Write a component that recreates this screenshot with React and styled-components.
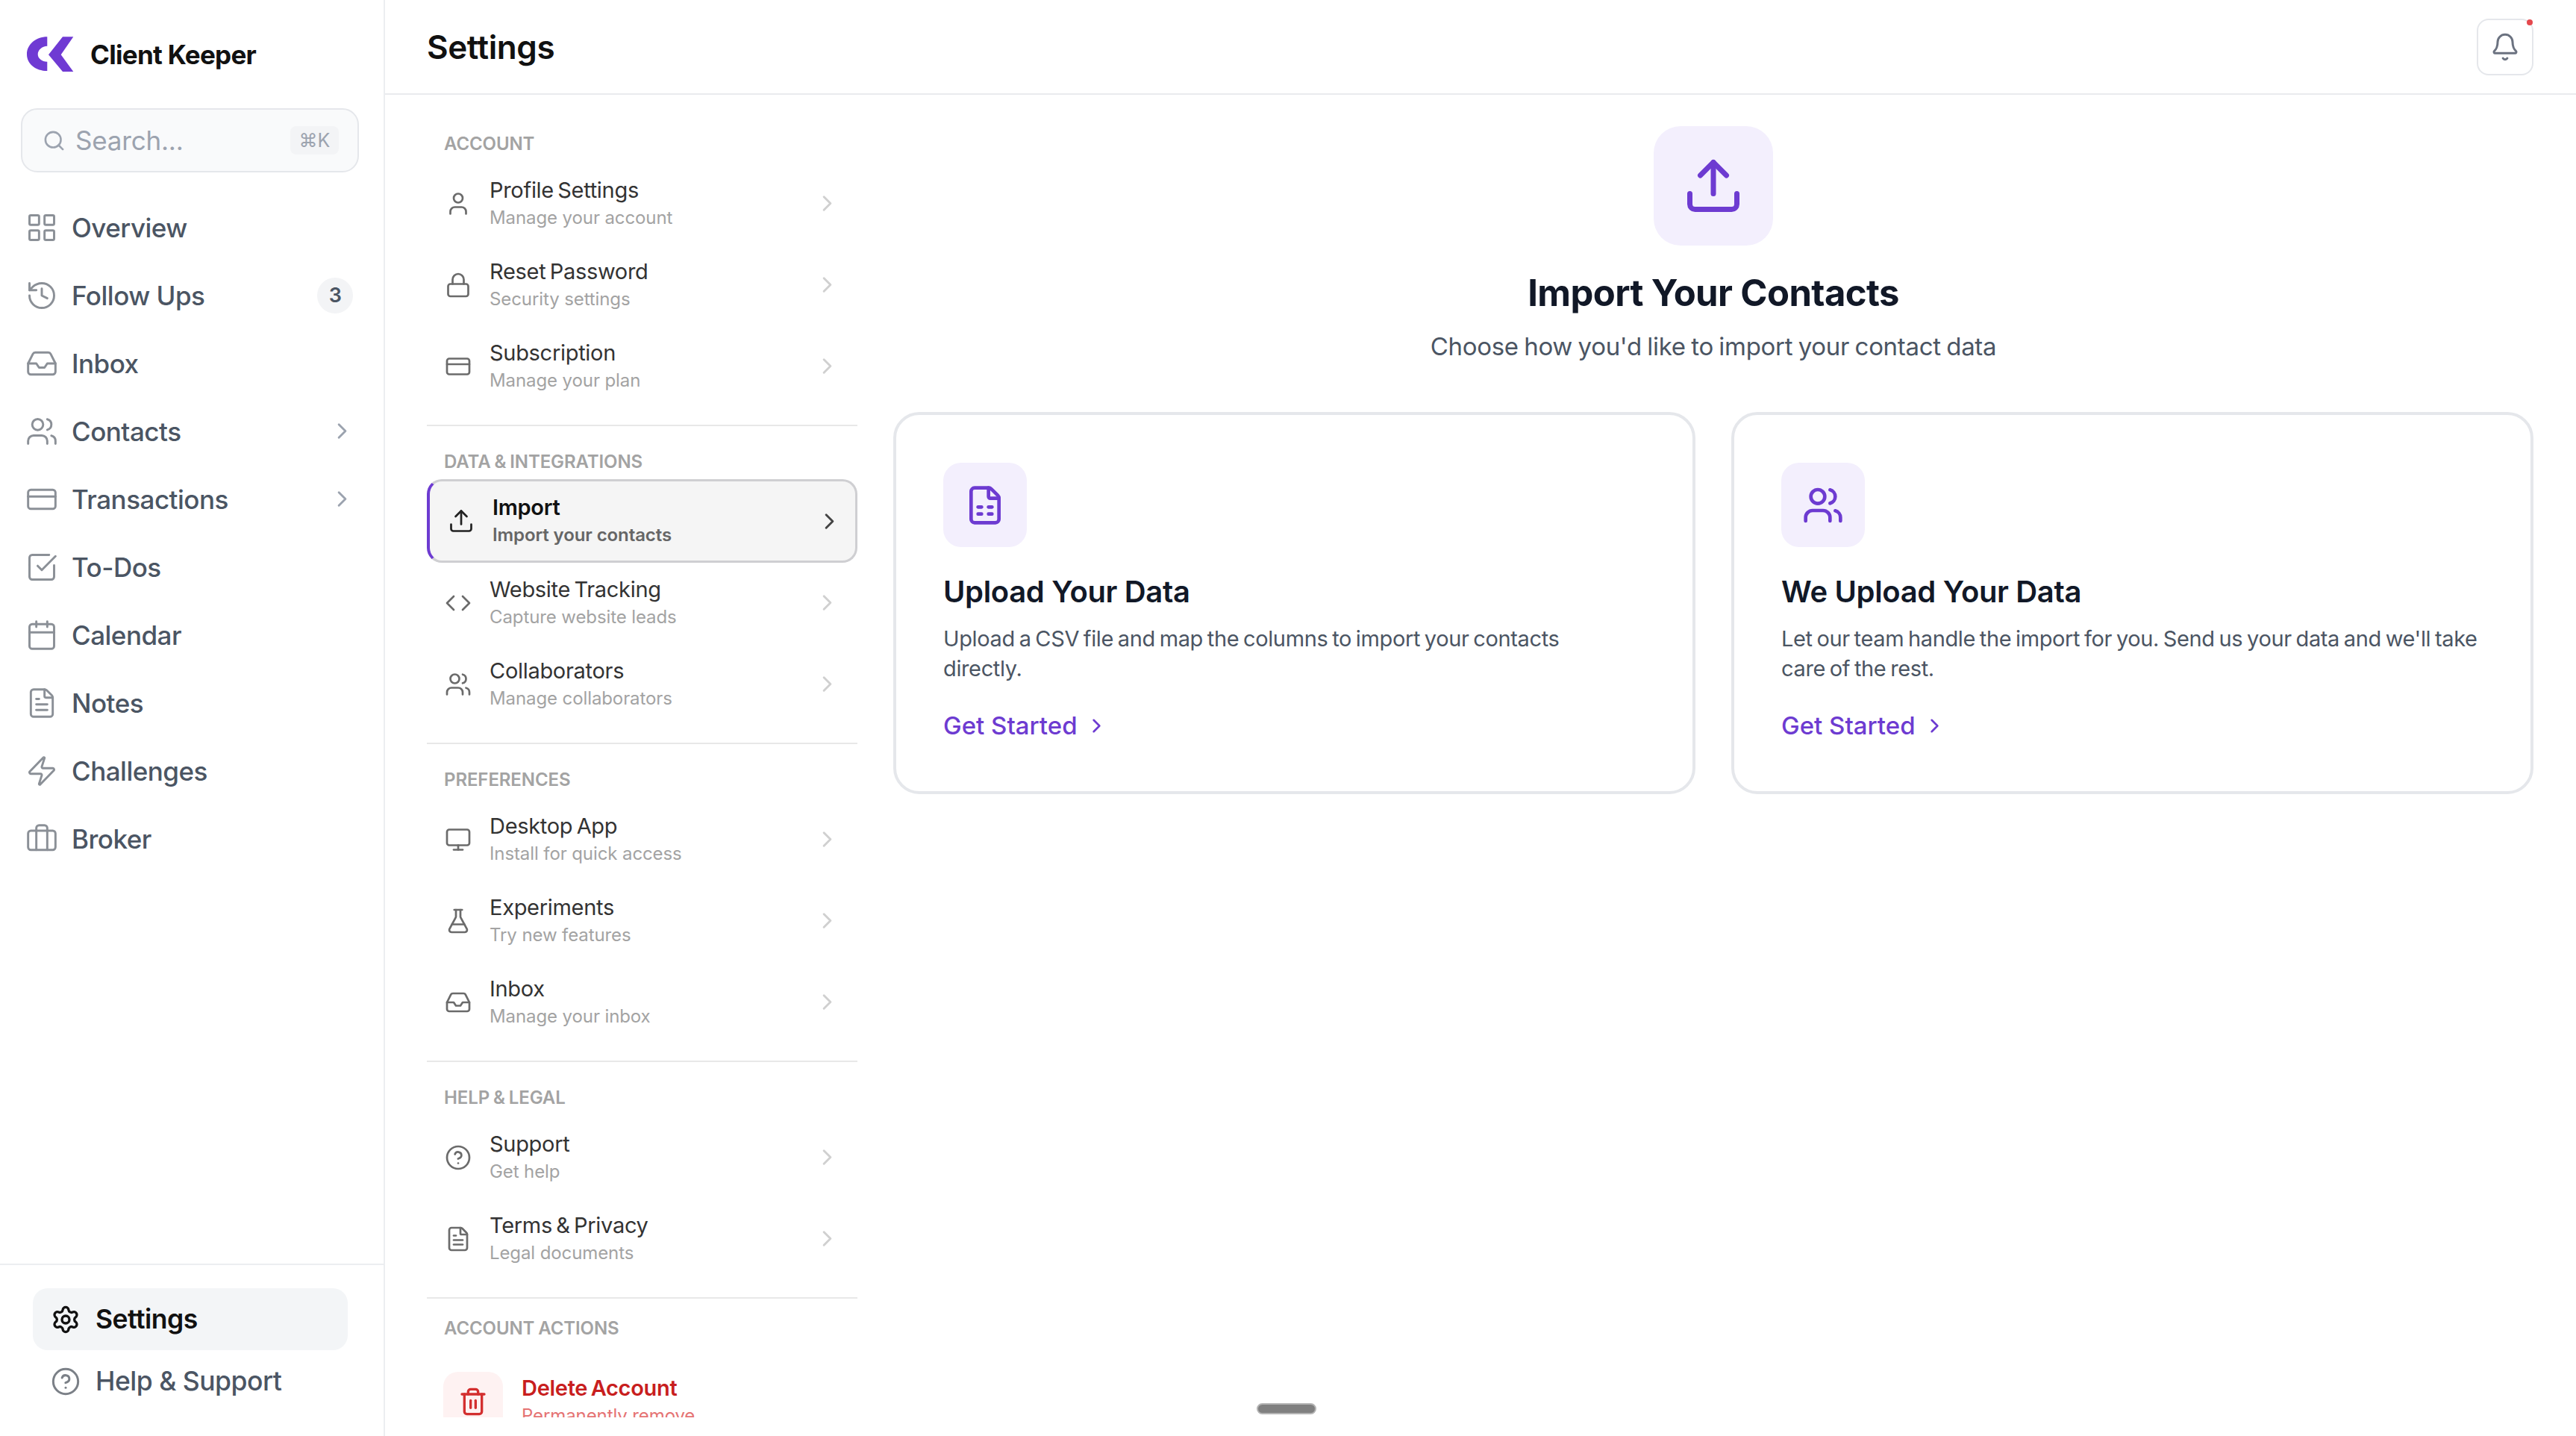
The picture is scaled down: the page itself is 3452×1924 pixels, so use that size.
import React from 'react';
import styled, { createGlobalStyle } from 'styled-components';
import {
  Search, LayoutGrid, History, Inbox, Users, CreditCard, SquareCheckBig, Calendar, FileText, Zap,
  Briefcase, ChevronRight, Settings, CircleHelp, Bell, User, Lock, Upload, Code, Monitor,
  FlaskConical, Trash2, FileSpreadsheet,
} from 'lucide-react';

const GlobalStyle = createGlobalStyle`
  html, body {
    margin: 0;
    padding: 0;
    background: #fff;
    font-family: Inter, "Liberation Sans", sans-serif;
  }
  * { box-sizing: border-box; }
`;

const Page = styled.div`
  display: grid;
  grid-template-columns: 516px 1fr;
  width: 3452px;
  height: 1924px;
  overflow: hidden;
  position: relative;
`;

const Sidebar = styled.aside`
  display: flex;
  flex-direction: column;
  border-right: 2px solid #eceef1;
  height: 1924px;
`;

const Brand = styled.div`
  display: flex;
  align-items: center;
  gap: 20px;
  height: 145px;
  padding: 0 0 0 35px;
  flex: none;
`;

const BrandName = styled.span`
  font-size: 35px;
  font-weight: 700;
  color: #111;
  letter-spacing: -0.7px;
`;

const SearchBox = styled.div`
  display: flex;
  align-items: center;
  flex: none;
  height: 86px;
  margin: 0 33px 0 28px;
  padding: 0 25px 0 27px;
  gap: 13px;
  background: #f9fafb;
  border: 2px solid #e5e7eb;
  border-radius: 22px;
  color: #9ca3af;
`;

const SearchText = styled.span`
  flex: 1;
  font-size: 35px;
  color: #9ca3af;
  letter-spacing: -0.2px;
`;

const Kbd = styled.span`
  display: flex;
  align-items: center;
  justify-content: center;
  width: 65px;
  height: 38px;
  border-radius: 8px;
  background: #f3f4f6;
  color: #9ca3af;
  font-size: 25px;
`;

const Nav = styled.nav`
  display: flex;
  flex-direction: column;
  padding: 28px 34px 0 34px;
`;

const NavRow = styled.div`
  display: flex;
  align-items: center;
  height: 91px;
  gap: 18px;
  color: #4b5563;
  font-size: 35px;
  font-weight: 500;
  letter-spacing: -0.5px;
  svg { color: #8b9097; flex: none; }
`;

const NavLabel = styled.span`
  flex: 1;
`;

const Badge = styled.span`
  display: flex;
  align-items: center;
  justify-content: center;
  width: 48px;
  height: 48px;
  margin-right: 7px;
  border-radius: 50%;
  background: #f3f4f6;
  color: #4b5563;
  font-size: 27px;
  font-weight: 600;
`;

const NavChevron = styled.span`
  display: flex;
  margin-right: 4px;
  svg { color: #9ca3af; }
`;

const SideFoot = styled.div`
  margin-top: auto;
  display: flex;
  flex-direction: column;
  padding: 31px 48px 0 44px;
  height: 231px;
  border-top: 2px solid #eceef1;
`;

const FootRow = styled.div`
  display: flex;
  align-items: center;
  gap: 20px;
  height: 83px;
  padding-left: 24px;
  border-radius: 20px;
  background: ${p => (p.$active ? '#f3f5f7' : 'transparent')};
  color: ${p => (p.$active ? '#111' : '#4b5563')};
  font-size: 35.5px;
  font-weight: ${p => (p.$active ? 600 : 500)};
  letter-spacing: -0.5px;
  svg { color: ${p => (p.$active ? '#111' : '#7b8087')}; flex: none; }
`;

const Main = styled.main`
  display: flex;
  flex-direction: column;
  min-width: 0;
`;

const TopBar = styled.header`
  display: flex;
  align-items: center;
  justify-content: space-between;
  flex: none;
  height: 127px;
  padding: 0 57px 0 56px;
  border-bottom: 2px solid #e9ebee;
`;

const PageTitle = styled.h1`
  margin: 0;
  font-size: 44px;
  font-weight: 600;
  color: #111;
  letter-spacing: -0.4px;
`;

const BellButton = styled.button`
  position: relative;
  display: flex;
  align-items: center;
  justify-content: center;
  width: 76px;
  height: 76px;
  padding: 0;
  background: #fff;
  border: 2px solid #e5e7eb;
  border-radius: 16px;
  color: #6b7280;
`;

const BellDot = styled.span`
  position: absolute;
  top: -1px;
  right: -1px;
  width: 8px;
  height: 8px;
  border-radius: 50%;
  background: #e5484d;
`;

const Body = styled.div`
  display: flex;
  flex: 1;
  gap: 48px;
  min-height: 0;
  padding: 0 57px 0 56px;
`;

const MenuColumn = styled.div`
  flex: none;
  width: 577px;
  height: 1772px;
  overflow: hidden;
  padding-top: 51px;
`;

const MenuSection = styled.section`
  padding-bottom: ${p => (p.$last ? 0 : 24)}px;
  margin-bottom: ${p => p.$gap ?? 33}px;
  border-bottom: ${p => (p.$last ? 'none' : '2px solid #e8e8e8')};
`;

const SectionTitle = styled.div`
  height: 30px;
  line-height: 30px;
  margin: 0 0 10px 23px;
  color: #a3a3a3;
  font-size: 24px;
  font-weight: 600;
  letter-spacing: -0.1px;
  word-spacing: -1px;
`;

const Row = styled.div`
  display: flex;
  align-items: center;
  height: 109px;
  gap: ${p => (p.$danger ? 25 : 20)}px;
  margin-top: ${p => (p.$danger ? 28 : 0)}px;
  padding: 0 20px;
  border-radius: 20px;
`;

const ActiveRow = styled(Row)`
  height: 112px;
  margin: -2px 0 -1px;
  border: 3px solid #cfcfd2;
  border-left: 4px solid #6d3bd1;
  background: #f5f5f5;
`;

const RowIcon = styled.span`
  display: flex;
  justify-content: center;
  width: 44px;
  flex: none;
  color: ${p => (p.$active ? '#222' : '#6b6b6b')};
`;

const RowIconBox = styled.span`
  display: flex;
  align-items: center;
  justify-content: center;
  flex: none;
  width: 80px;
  height: 80px;
  margin-left: 2px;
  border-radius: 20px;
  background: #fef2f2;
  color: #d32f2f;
`;

const RowText = styled.div`
  flex: 1;
  min-width: 0;
`;

const RowTitle = styled.div`
  font-size: 29px;
  line-height: 38px;
  font-weight: ${p => (p.$active || p.$danger ? 600 : 400)};
  color: ${p => (p.$danger ? '#c81e1e' : p.$active ? '#111' : '#333')};
  letter-spacing: -0.3px;
  word-spacing: -2.5px;
`;

const RowSub = styled.div`
  font-size: 24px;
  line-height: 36px;
  font-weight: ${p => (p.$active ? 600 : 400)};
  color: ${p => (p.$danger ? '#e57373' : p.$active ? '#666' : '#a3a3a3')};
  letter-spacing: -0.1px;
`;

const RowChevron = styled.span`
  display: flex;
  color: ${p => (p.$active ? '#444' : '#d0d0d0')};
  margin-right: ${p => (p.$active ? -3 : 3)}px;
`;

const Content = styled.div`
  flex: 1;
  min-width: 0;
`;

const Hero = styled.div`
  display: flex;
  flex-direction: column;
  align-items: center;
  padding-top: 42px;
`;

const HeroIcon = styled.div`
  display: flex;
  align-items: center;
  justify-content: center;
  width: 160px;
  height: 160px;
  border-radius: 36px;
  background: #f3effd;
  color: #6d3bd1;
`;

const HeroTitle = styled.h2`
  margin: 30px 0 0;
  font-size: 49px;
  line-height: 68px;
  font-weight: 700;
  color: #111827;
  letter-spacing: -0.6px;
`;

const HeroSub = styled.p`
  margin: 15px 0 0;
  font-size: 33px;
  line-height: 44px;
  color: #4b5563;
  letter-spacing: -0.3px;
  word-spacing: -1.5px;
`;

const Cards = styled.div`
  display: grid;
  grid-template-columns: 1fr 1fr;
  gap: 48px;
  margin-top: 66px;
`;

const Card = styled.article`
  height: 512px;
  padding: 64px 63px 0;
  border: 4px solid #e5e7eb;
  border-radius: 35px;
  background: #fff;
`;

const CardIcon = styled.div`
  display: flex;
  align-items: center;
  justify-content: center;
  width: 112px;
  height: 113px;
  border-radius: 24px;
  background: #f3effd;
  color: #6d3bd1;
`;

const CardTitle = styled.h3`
  margin: 32px 0 0;
  font-size: 40px;
  line-height: 56px;
  font-weight: 600;
  color: #111827;
  letter-spacing: -0.35px;
`;

const CardText = styled.p`
  margin: 15px 0 0;
  max-width: 936px;
  font-size: 29px;
  line-height: 40px;
  color: #4b5563;
  letter-spacing: -0.37px;
  word-spacing: -2px;
`;

const CardLink = styled.a`
  display: inline-flex;
  align-items: center;
  gap: 10px;
  margin-top: 34px;
  font-size: 33px;
  line-height: 44px;
  font-weight: 500;
  color: #6d3bd1;
`;

const DragHandle = styled.div`
  position: absolute;
  left: 1684px;
  top: 1880px;
  width: 80px;
  height: 15px;
  border-radius: 8px;
  background: #808080;
  border: 2px solid #b4b4b4;
`;

const Logo = () => (
  <svg width="66" height="52" viewBox="0 0 66 52" fill="#6f3ad3">
    <path d="M28.3 2.3C13 2.3 1 12.500 1 25.700S13 48 28.300 48V35.700c-7 0-12.600-4.500-12.600-10s5.600-11 12.600-11z" />
    <path d="M49 2.300h14.300L46.700 26.300 63.300 49H49L30 26.300z" />
  </svg>
);

const navItems = [
  { label: 'Overview', icon: LayoutGrid },
  { label: 'Follow Ups', icon: History, badge: 3 },
  { label: 'Inbox', icon: Inbox },
  { label: 'Contacts', icon: Users, arrow: true },
  { label: 'Transactions', icon: CreditCard, arrow: true },
  { label: 'To-Dos', icon: SquareCheckBig },
  { label: 'Calendar', icon: Calendar },
  { label: 'Notes', icon: FileText },
  { label: 'Challenges', icon: Zap },
  { label: 'Broker', icon: Briefcase },
];

const sections = [
  {
    title: 'ACCOUNT',
    rows: [
      { title: 'Profile Settings', sub: 'Manage your account', icon: User },
      { title: 'Reset Password', sub: 'Security settings', icon: Lock },
      { title: 'Subscription', sub: 'Manage your plan', icon: CreditCard },
    ],
  },
  {
    title: 'DATA & INTEGRATIONS',
    rows: [
      { title: 'Import', sub: 'Import your contacts', icon: Upload, active: true },
      { title: 'Website Tracking', sub: 'Capture website leads', icon: Code },
      { title: 'Collaborators', sub: 'Manage collaborators', icon: Users },
    ],
  },
  {
    title: 'PREFERENCES',
    rows: [
      { title: 'Desktop App', sub: 'Install for quick access', icon: Monitor },
      { title: 'Experiments', sub: 'Try new features', icon: FlaskConical },
      { title: 'Inbox', sub: 'Manage your inbox', icon: Inbox },
    ],
  },
  {
    title: 'HELP & LEGAL',
    gap: 25,
    rows: [
      { title: 'Support', sub: 'Get help', icon: CircleHelp },
      { title: 'Terms & Privacy', sub: 'Legal documents', icon: FileText },
    ],
  },
];

const cards = [
  {
    title: 'Upload Your Data',
    text: 'Upload a CSV file and map the columns to import your contacts directly.',
    icon: FileSpreadsheet,
  },
  {
    title: 'We Upload Your Data',
    text: "Let our team handle the import for you. Send us your data and we'll take care of the rest.",
    icon: Users,
  },
];

const MenuRow = ({ title, sub, icon: Icon, active }) => {
  const Wrapper = active ? ActiveRow : Row;
  return (
    <Wrapper>
      <RowIcon $active={active}><Icon size={36} strokeWidth={1.8} /></RowIcon>
      <RowText>
        <RowTitle $active={active}>{title}</RowTitle>
        <RowSub $active={active}>{sub}</RowSub>
      </RowText>
      <RowChevron $active={active}><ChevronRight size={35} strokeWidth={2} /></RowChevron>
    </Wrapper>
  );
};

const App = () => (
  <Page>
    <GlobalStyle />
    <Sidebar>
      <Brand>
        <Logo />
        <BrandName>Client Keeper</BrandName>
      </Brand>
      <SearchBox>
        <Search size={31} strokeWidth={2} />
        <SearchText>Search...</SearchText>
        <Kbd>⌘K</Kbd>
      </SearchBox>
      <Nav>
        {navItems.map(({ label, icon: Icon, badge, arrow }) => (
          <NavRow key={label}>
            <Icon size={44} strokeWidth={1.6} />
            <NavLabel>{label}</NavLabel>
            {badge && <Badge>{badge}</Badge>}
            {arrow && <NavChevron><ChevronRight size={35} strokeWidth={2} /></NavChevron>}
          </NavRow>
        ))}
      </Nav>
      <SideFoot>
        <FootRow $active>
          <Settings size={40} strokeWidth={2} />
          Settings
        </FootRow>
        <FootRow>
          <CircleHelp size={40} strokeWidth={1.8} />
          Help &amp; Support
        </FootRow>
      </SideFoot>
    </Sidebar>
    <Main>
      <TopBar>
        <PageTitle>Settings</PageTitle>
        <BellButton>
          <Bell size={40} strokeWidth={1.8} />
          <BellDot />
        </BellButton>
      </TopBar>
      <Body>
        <MenuColumn>
          {sections.map(section => (
            <MenuSection key={section.title} $gap={section.gap}>
              <SectionTitle>{section.title}</SectionTitle>
              {section.rows.map(row => (
                <MenuRow key={row.title} {...row} />
              ))}
            </MenuSection>
          ))}
          <MenuSection $last>
            <SectionTitle>ACCOUNT ACTIONS</SectionTitle>
            <Row $danger>
              <RowIconBox><Trash2 size={40} strokeWidth={2} /></RowIconBox>
              <RowText>
                <RowTitle $danger>Delete Account</RowTitle>
                <RowSub $danger>Permanently remove</RowSub>
              </RowText>
            </Row>
          </MenuSection>
        </MenuColumn>
        <Content>
          <Hero>
            <HeroIcon><Upload size={84} strokeWidth={2} /></HeroIcon>
            <HeroTitle>Import Your Contacts</HeroTitle>
            <HeroSub>Choose how you'd like to import your contact data</HeroSub>
          </Hero>
          <Cards>
            {cards.map(({ title, text, icon: Icon }) => (
              <Card key={title}>
                <CardIcon><Icon size={56} strokeWidth={2} /></CardIcon>
                <CardTitle>{title}</CardTitle>
                <CardText>{text}</CardText>
                <CardLink>Get Started <ChevronRight size={31} strokeWidth={2} /></CardLink>
              </Card>
            ))}
          </Cards>
        </Content>
      </Body>
    </Main>
    <DragHandle />
  </Page>
);

export default App;
